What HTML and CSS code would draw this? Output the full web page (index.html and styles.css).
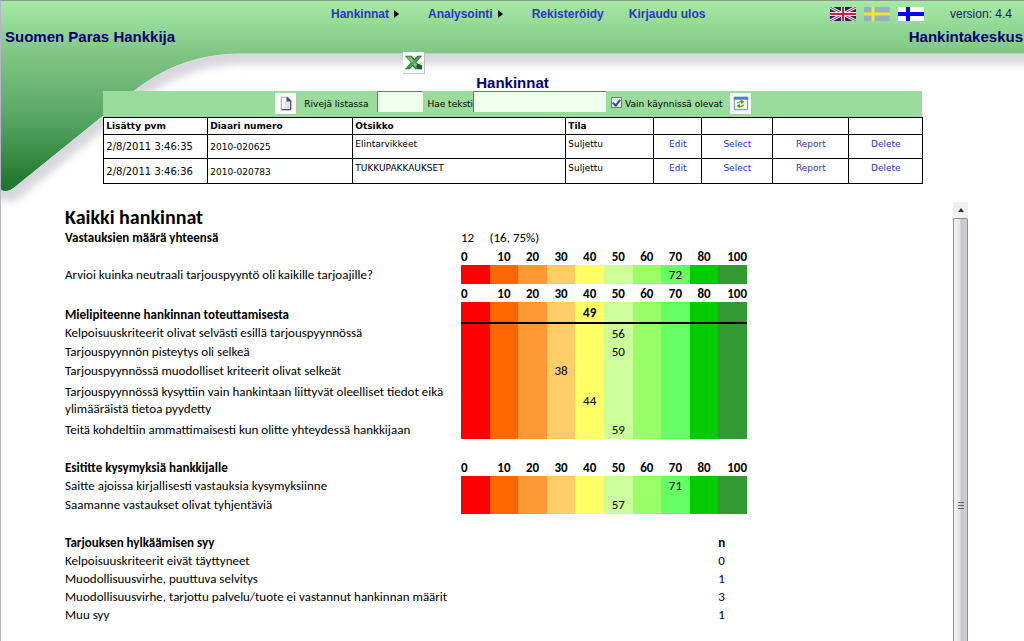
FILE: index.html
```html
<!DOCTYPE html>
<html lang="fi">
<head>
<meta charset="utf-8">
<title>Suomen Paras Hankkija</title>
<link rel="stylesheet" href="styles.css">
</head>
<body>
<svg class="backdrop" aria-hidden="true">
  <defs>
    <linearGradient id="green" gradientUnits="userSpaceOnUse" x1="0" y1="0" x2="0" y2="192">
      <stop offset="0" stop-color="#a6eaa6"/><stop offset=".28" stop-color="#80c584"/><stop offset=".6" stop-color="#5aa866"/><stop offset="1" stop-color="#1b7229"/>
    </linearGradient>
    <filter id="soft" x="-5%" y="-10%" width="110%" height="130%"><feGaussianBlur stdDeviation="4"/></filter>
  </defs>
  <path d="M-40-20H4000V54H240C200 54 165 67 134 91L14 188Q6 194 1 190L-40 190Z" transform="translate(5 10)" fill="#d6d6dc" filter="url(#soft)"/>
  <path d="M0 0H4000V54H240C200 54 165 67 134 91L14 188Q6 194 1 190L0 190Z" fill="url(#green)" stroke="#dfe3e0"/>
</svg>
<div class="page">
  <header class="header">
    <div class="topline">
      <nav class="nav">
        <a href="#">Hankinnat<span class="arrow"></span></a>
        <a href="#">Analysointi<span class="arrow"></span></a>
        <a href="#">Rekisteröidy</a>
        <a href="#">Kirjaudu ulos</a>
      </nav>
      <div class="tools">
        <a href="#" class="flag" aria-label="English"><svg viewBox="0 0 26 14"><path fill="#25245c" d="M0 0h26v14H0z"/><path stroke="#e8e4ec" stroke-width="3" d="M0 0l26 14M26 0L0 14"/><path stroke="#cf2948" d="M0 0l26 14M26 0L0 14"/><path stroke="#eee4ea" stroke-width="4" d="M13 0v14M0 7h26"/><path stroke="#cf2040" stroke-width="2" d="M13 0v14M0 7h26"/></svg></a>
        <a href="#" class="flag" aria-label="Svenska"><svg viewBox="0 0 26 14"><path fill="#98b0c6" d="M0 0h26v14H0z"/><path stroke="#eee82e" stroke-width="3" d="M9 0v14M0 7h26"/></svg></a>
        <a href="#" class="flag" aria-label="Suomi"><svg viewBox="0 0 26 14"><path fill="#fff" d="M0 0h26v14H0z"/><path stroke="#0808f0" stroke-width="4" d="M10 0v14M0 7h26"/></svg></a>
        <span class="version">version: 4.4</span>
      </div>
    </div>
    <div class="brand"><span>Suomen Paras Hankkija</span><span>Hankintakeskus</span></div>
  </header>

  <div class="export">
    <button class="icon-btn" aria-label="Excel"><svg viewBox="0 0 22 22"><path fill="#2f7d3a" d="M2 4h7l3 3 3-3h5l-6 7 6 4v3h-7l-3-3-3 3H2l6-7z"/><path fill="#7cc576" d="M4 5h4l9 11h-4z"/><path fill="#4ea353" d="M16 5h2L8 16H4z"/><path fill="#1c5c28" d="M15 12l5 2v4h-4l-2-3z"/></svg></button>
  </div>
  <h1 class="title">Hankinnat</h1>

  <section class="list">
    <form class="search">
      <button type="button" class="icon-btn" aria-label="Uusi"><svg viewBox="0 0 22 22"><path fill="#fff" stroke="#9aa0bd" d="M6.500 4.500h7l3 3v10h-10z"/><path fill="#c9cfe8" d="M12 5v4h4v8H9z" opacity=".6"/><path fill="none" stroke="#2a2f66" d="M13 4.500l3.500 3.500v9.500H7"/><path fill="#454b80" d="M12 4l5 5h-5z"/></svg></button>
      <label for="rows" class="rows-label">Rivejä listassa</label><input id="rows" class="field rows" type="text">
      <label for="text" class="text-label">Hae teksti</label><input id="text" class="field text" type="text">
      <input id="open" class="check" type="checkbox" checked><label for="open">Vain käynnissä olevat</label>
      <button type="button" class="icon-btn refresh" aria-label="Päivitä"><svg viewBox="0 0 22 22"><path fill="#f4f8fd" stroke="#5f86c4" d="M4.500 4.500h14v13h-14z"/><path fill="#4d7fd0" d="M4 4h15v3H4z"/><path fill="none" stroke="#73a821" stroke-width="1.500" d="M8 11q0-2 4-2M14 12q0 2-4 2"/><path fill="#5d9418" d="M11 7l4 2-3 3zM11 16l-4-2 3-3z"/></svg></button>
    </form>
    <table class="grid">
      <colgroup><col class="c-date"><col class="c-num"><col class="c-title"><col class="c-state"><col class="c-edit"><col class="c-select"><col class="c-report"><col class="c-delete"></colgroup>
      <tr><th>Lisätty pvm</th><th>Diaari numero</th><th>Otsikko</th><th>Tila</th><th></th><th></th><th></th><th></th></tr>
      <tr><td class="mid date">2/8/2011 3:46:35</td><td class="mid">2010-020625</td><td>Elintarvikkeet</td><td>Suljettu</td><td class="act"><a href="#">Edit</a></td><td class="act"><a href="#">Select</a></td><td class="act"><a href="#">Report</a></td><td class="act"><a href="#">Delete</a></td></tr>
      <tr class="last"><td class="mid date">2/8/2011 3:46:36</td><td class="mid">2010-020783</td><td>TUKKUPAKKAUKSET</td><td>Suljettu</td><td class="act"><a href="#">Edit</a></td><td class="act"><a href="#">Select</a></td><td class="act"><a href="#">Report</a></td><td class="act"><a href="#">Delete</a></td></tr>
    </table>
  </section>

  <main class="viewer">
    <div class="report">
      <h2>Kaikki hankinnat</h2>
      <table class="results">
        <colgroup><col class="c-label"><col span="10"></colgroup>
        <tr><th scope="row">Vastauksien määrä yhteensä</th><td class="first">12</td><td class="first" colspan="9">(16, 75%)</td></tr>
        <tr class="scale"><td></td><th>0</th><th>10</th><th>20</th><th>30</th><th>40</th><th>50</th><th>60</th><th>70</th><th>80</th><th>100</th></tr>
        <tr class="heat"><td>Arvioi kuinka neutraali tarjouspyyntö oli kaikille tarjoajille?</td><td></td><td></td><td></td><td></td><td></td><td></td><td></td><td>72</td><td></td><td></td></tr>
        <tr class="scale"><td></td><th>0</th><th>10</th><th>20</th><th>30</th><th>40</th><th>50</th><th>60</th><th>70</th><th>80</th><th>100</th></tr>
        <tr class="heat total"><th scope="row">Mielipiteenne hankinnan toteuttamisesta</th><td></td><td></td><td></td><td></td><td>49</td><td></td><td></td><td></td><td></td><td></td></tr>
        <tr class="heat"><td>Kelpoisuuskriteerit olivat selvästi esillä tarjouspyynnössä</td><td></td><td></td><td></td><td></td><td></td><td>56</td><td></td><td></td><td></td><td></td></tr>
        <tr class="heat"><td>Tarjouspyynnön pisteytys oli selkeä</td><td></td><td></td><td></td><td></td><td></td><td>50</td><td></td><td></td><td></td><td></td></tr>
        <tr class="heat"><td>Tarjouspyynnössä muodolliset kriteerit olivat selkeät</td><td></td><td></td><td></td><td>38</td><td></td><td></td><td></td><td></td><td></td><td></td></tr>
        <tr class="heat tall"><td>Tarjouspyynnössä kysyttiin vain hankintaan liittyvät oleelliset tiedot eikä<br>ylimääräistä tietoa pyydetty</td><td></td><td></td><td></td><td></td><td>44</td><td></td><td></td><td></td><td></td><td></td></tr>
        <tr class="heat"><td>Teitä kohdeltiin ammattimaisesti kun olitte yhteydessä hankkijaan</td><td></td><td></td><td></td><td></td><td></td><td>59</td><td></td><td></td><td></td><td></td></tr>
        <tr class="gap"><td colspan="11"></td></tr>
        <tr class="scale"><th scope="row">Esititte kysymyksiä hankkijalle</th><th>0</th><th>10</th><th>20</th><th>30</th><th>40</th><th>50</th><th>60</th><th>70</th><th>80</th><th>100</th></tr>
        <tr class="heat"><td>Saitte ajoissa kirjallisesti vastauksia kysymyksiinne</td><td></td><td></td><td></td><td></td><td></td><td></td><td></td><td>71</td><td></td><td></td></tr>
        <tr class="heat"><td>Saamanne vastaukset olivat tyhjentäviä</td><td></td><td></td><td></td><td></td><td></td><td>57</td><td></td><td></td><td></td><td></td></tr>
        <tr class="gap"><td colspan="11"></td></tr>
        <tr class="count"><th scope="row" colspan="10">Tarjouksen hylkäämisen syy</th><th>n</th></tr>
        <tr class="count"><td colspan="10">Kelpoisuuskriteerit eivät täyttyneet</td><td>0</td></tr>
        <tr class="count"><td colspan="10">Muodollisuusvirhe, puuttuva selvitys</td><td>1</td></tr>
        <tr class="count"><td colspan="10">Muodollisuusvirhe, tarjottu palvelu/tuote ei vastannut hankinnan määrit</td><td>3</td></tr>
        <tr class="count"><td colspan="10">Muu syy</td><td>1</td></tr>
      </table>
    </div>
    <div class="scrollbar" aria-hidden="true"><div class="up"><span></span></div><div class="thumb"><i></i></div></div>
  </main>
</div>
</body>
</html>
```
FILE: styles.css
```css
* { box-sizing: border-box; }
body { margin: 0; background: #fff; font-family: "Liberation Sans", Arial, sans-serif; color: #000; }
a { color: #2a35c8; text-decoration: none; }
button { padding: 0; cursor: pointer; }

.backdrop { position: absolute; top: 0; left: 0; width: 100%; height: 220px; z-index: -1; }
.page { display: flex; flex-direction: column; min-height: 100vh; border-left: 1px solid #b4b8c0; border-top: 1px solid #8a9a8a; }

.header { height: 51px; }
.topline { display: flex; justify-content: space-between; height: 25px; align-items: center; padding: 0 12px 0 330px; }
.nav { display: flex; gap: 25px; font-size: 12px; font-weight: bold; }
.nav a { display: flex; align-items: center; }
.arrow { margin: 0 4px 0 5px; border: 4px solid transparent; border-left: 5px solid #000; border-right: 0; }
.tools { display: flex; align-items: center; gap: 8px; }
.flag svg { display: block; width: 26px; height: 14px; }
.version { margin-left: 18px; font-size: 12px; color: #10285c; }
.brand { display: flex; justify-content: space-between; padding: 2px 1px 0 4px; font-size: 15px; line-height: 18px; font-weight: bold; color: #000078; }

.icon-btn { width: 22px; height: 22px; flex: none; background: #fff; border: 0; border-right: 1px solid #b8c4b8; border-bottom: 1px solid #b8c4b8; }
.icon-btn svg { display: block; width: 21px; height: 21px; }
.export { display: flex; padding-left: 402px; }
.title { margin: 0; font-size: 15px; line-height: 17px; text-align: center; color: #000078; }

.list { width: 80%; margin: 0 auto; font-family: "DejaVu Sans", Verdana, sans-serif; font-size: 9px; }
.search { display: flex; align-items: center; height: 26px; padding-left: 172px; background: #9adc9c; white-space: nowrap; }
.rows-label { margin: 0 9px 0 7px; }
.text-label { margin-left: 4px; }
.field { height: 21px; border: 0; border-top: 1px solid #6b7a6b; border-left: 1px solid #6b7a6b; background: #eeffee; align-self: flex-start; }
.rows { width: 46px; }
.text { width: 133px; }
.check { appearance: none; width: 11px; height: 11px; margin: 0 3px 4px 5px; border: 1px solid #6f8090; background: #f4f6fc; display: grid; place-items: center; }
.check:checked::after { content: ""; width: 3px; height: 6px; border: solid #31479c; border-width: 0 2px 2px 0; transform: rotate(40deg); }
.refresh { margin-left: 7px; }
.grid { width: 100%; table-layout: fixed; border-collapse: collapse; background: #fff; line-height: 12px; }
.grid th, .grid td { border: 1px solid #000; padding: 2px; text-align: left; vertical-align: top; }
.grid th { height: 17px; }
.grid td { height: 24px; padding-top: 3px; }
.grid .last td { height: 25px; }
.grid .mid { vertical-align: middle; }
.grid .date { font-size: 10px; }
.grid .act { text-align: center; }
.c-date { width: 104px; }
.c-num { width: 145px; }
.c-title { width: 213px; }
.c-state { width: 88px; }
.c-edit { width: 48px; }
.c-select { width: 71px; }
.c-report { width: 76px; }
.c-delete { width: 74px; }

.viewer { flex: 1; display: flex; justify-content: space-between; margin-top: 18px; padding: 0 56px 0 64px; font-family: Carlito, Calibri, Lato, sans-serif; font-size: 13px; }
.report { padding-top: 4px; }
.report h2 { margin: 0; font-size: 20px; line-height: 22px; }
.results { width: 682px; table-layout: fixed; border-collapse: collapse; line-height: 17px; }
.c-label { width: 396px; }
.results th, .results td { height: 19px; padding: 0; text-align: center; white-space: nowrap; }
.results tr > :first-child { text-align: left; }
.results .first { text-align: left; }
.results .scale > * { height: 18px; }
.scale > :nth-child(2) { text-align: left; }
.scale > :last-child { text-align: right; }
.results .total > * { height: 21px; }
.total > td { font-weight: bold; border-bottom: 2px solid #000; }
.results .total > th { vertical-align: bottom; }
.results .tall > * { height: 40px; }
.heat > :nth-child(2) { background: #f00; }
.heat > :nth-child(3) { background: #f60; }
.heat > :nth-child(4) { background: #f93; }
.heat > :nth-child(5) { background: #fc6; }
.heat > :nth-child(6) { background: #ff6; }
.heat > :nth-child(7) { background: #cf9; }
.heat > :nth-child(8) { background: #9f6; }
.heat > :nth-child(9) { background: #6f6; }
.heat > :nth-child(10) { background: #0c0; }
.heat > :nth-child(11) { background: #393; }
.results .count > * { height: 18px; }
.results .count > :last-child { text-align: left; }

.scrollbar { display: flex; flex-direction: column; width: 15px; }
.up { display: grid; place-items: center; height: 16px; background: #f0f0f0; }
.up span { border: 3px solid transparent; border-bottom: 4px solid #333; border-top: 0; }
.thumb { flex: 1; display: flex; justify-content: center; border: 1px solid #8e8e92; border-bottom: 0; border-radius: 2px 2px 0 0; background: linear-gradient(90deg, #f4f4f4, #e4e4e6 45%, #c6c6ca 55%, #cfcfd2); }
.thumb i { width: 6px; height: 7px; margin-top: 283px; background: repeating-linear-gradient(#666 0 1px, transparent 1px 3px); }
```
